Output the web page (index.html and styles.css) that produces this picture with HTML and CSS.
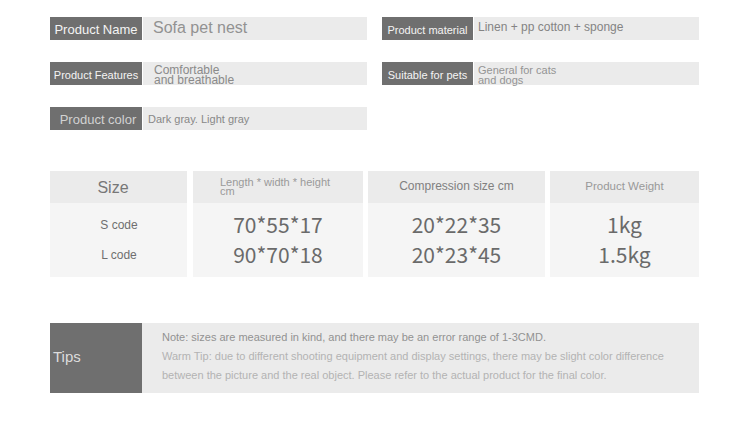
FILE: index.html
```html
<!DOCTYPE html>
<html>
<head>
<meta charset="utf-8">
<link rel="stylesheet" href="styles.css">
</head>
<body>
<div class="page">
  <div class="specs">
    <div class="spec"><div class="lab lab-13">Product Name</div><div class="val val-name">Sofa pet nest</div></div>
    <div class="spec"><div class="lab lab-11">Product material</div><div class="val val-mat">Linen + pp cotton + sponge</div></div>
    <div class="spec"><div class="lab lab-11">Product Features</div><div class="val val-two val-feat">Comfortable<br>and breathable</div></div>
    <div class="spec"><div class="lab lab-11">Suitable for pets</div><div class="val val-two val-pets">General for cats<br>and dogs</div></div>
    <div class="spec"><div class="lab lab-13 lab-color">Product color</div><div class="val val-color">Dark gray. Light gray</div></div>
  </div>

  <div class="sizes">
    <div class="col col-size">
      <div class="head head-size">Size</div>
      <div class="body body-code"><div>S code</div><div>L code</div></div>
    </div>
    <div class="col col-dim">
      <div class="head head-dim">Length * width * height<br>cm</div>
      <div class="body body-num"><div>70*55*17</div><div>90*70*18</div></div>
    </div>
    <div class="col col-comp">
      <div class="head head-comp">Compression size cm</div>
      <div class="body body-num"><div>20*22*35</div><div>20*23*45</div></div>
    </div>
    <div class="col col-wt">
      <div class="head head-wt">Product Weight</div>
      <div class="body body-num"><div>1kg</div><div>1.5kg</div></div>
    </div>
  </div>

  <div class="tips">
    <div class="tips-lab">Tips</div>
    <div class="tips-body">
      <p class="note">Note: sizes are measured in kind, and there may be an error range of 1-3CMD.</p>
      <p>Warm Tip: due to different shooting equipment and display settings, there may be slight color difference</p>
      <p>between the picture and the real object. Please refer to the actual product for the final color.</p>
    </div>
  </div>
</div>
</body>
</html>
```
FILE: styles.css
```css
html, body {
  margin: 0;
  padding: 0;
  background: #ffffff;
}
body {
  font-family: "Liberation Sans", Arial, sans-serif;
  width: 750px;
  height: 433px;
  overflow: hidden;
}
.page {
  padding: 17px 0 0 50px;
  width: 649px;
}
.specs {
  display: grid;
  grid-template-columns: 317px 317px;
  column-gap: 15px;
  row-gap: 22px;
}
.spec {
  display: flex;
  height: 23px;
}
.lab {
  width: 92px;
  flex: none;
  background: #6f6f6f;
  color: #f4f4f4;
  display: flex;
  align-items: center;
  justify-content: center;
  white-space: nowrap;
  box-sizing: border-box;
  padding-top: 2px;
}
.lab-13 { font-size: 13px; }
.lab-11 { font-size: 11px; }
.lab-color { color: #d2d2d2; padding-left: 4px; }
.val {
  flex: 1;
  margin-left: 1px;
  background: #ebebeb;
  color: #8a8a8a;
  display: flex;
  align-items: center;
  white-space: nowrap;
}
.val-name { font-size: 16px; padding-left: 10px; padding-bottom: 2px; color: #929292; }
.val-mat { font-size: 12px; padding-left: 4px; padding-bottom: 4px; color: #848484; }
.val-two { font-size: 12px; line-height: 10px; padding-left: 11px; padding-top: 2px; }
.val-pets { font-size: 11px; line-height: 10px; padding-left: 4px; color: #949494; }
.val-color { font-size: 11px; padding-left: 5px; color: #888888; }

.spec:nth-child(2) .lab, .spec:nth-child(4) .lab { width: 91px; }

.sizes {
  display: flex;
  margin-top: 41px;
  gap: 5px;
}
.col-size { width: 137px; margin-right: 1px; }
.col-dim { width: 170px; }
.col-comp { width: 177px; }
.col-wt { width: 149px; }
.head {
  height: 32px;
  background: #ebebeb;
  color: #8c8c8c;
  display: flex;
  align-items: center;
  justify-content: center;
  text-align: center;
  box-sizing: border-box;
}
.head-size { font-size: 16px; color: #777777; padding-right: 11px; padding-top: 1px; }
.head-dim {
  font-size: 11px;
  line-height: 9px;
  justify-content: flex-start;
  text-align: left;
  padding-left: 27px;
  color: #9a9a9a;
}
.head-comp { font-size: 12px; color: #808080; padding-bottom: 3px; }
.head-wt { font-size: 11.5px; color: #999999; padding-bottom: 3px; }
.body {
  height: 74px;
  background: #f5f5f5;
  display: flex;
  flex-direction: column;
  align-items: center;
  justify-content: center;
  box-sizing: border-box;
}
.body-code {
  font-size: 12px;
  color: #6f6f6f;
  line-height: 30px;
  padding-left: 1px;
}
.body-num {
  font-family: "Noto Sans CJK SC", "Noto Sans", sans-serif;
  font-size: 21px;
  color: #6a6a6a;
  line-height: 30px;
  padding-bottom: 2px;
}

.tips {
  display: flex;
  margin-top: 46px;
  height: 70px;
}
.tips-lab {
  width: 92px;
  flex: none;
  background: #6f6f6f;
  color: #dcdcdc;
  font-size: 15px;
  display: flex;
  align-items: center;
  padding-left: 3px;
  padding-bottom: 3px;
  box-sizing: border-box;
}
.tips-body {
  flex: 1;
  background: #ebebeb;
  padding: 5px 0 0 20px;
  font-size: 11px;
  line-height: 19px;
  color: #b3b3b3;
}
.tips-body p { margin: 0; white-space: nowrap; }
.tips-body .note { color: #929292; }
```
